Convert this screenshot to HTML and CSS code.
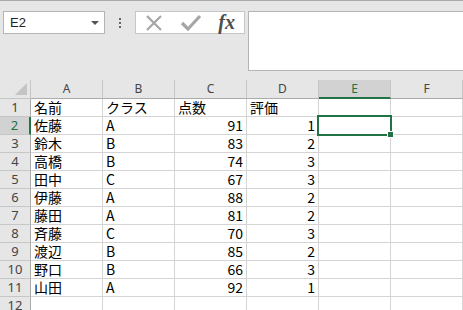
FILE: index.html
```html
<!DOCTYPE html>
<html>
<head>
    <meta charset="utf-8">
    <title>Excel</title>
    <link rel="stylesheet" href="styles.css">
</head>
<body>
    <div class="toolbar">
        <div class="namebox">
            <span>E2</span>
            <svg class="drop" width="8" height="4" viewBox="0 0 8 4"><path d="M0 0H8L4 4Z" fill="#555"/></svg>
        </div>
        <div class="dots"><i></i><i></i><i></i></div>
        <div class="fbuttons">
            <svg width="20" height="20" viewBox="0 0 20 20"><path d="M3 3L17 17M17 3L3 17" stroke="#a6a6a6" stroke-width="2.2" fill="none"/></svg>
            <svg width="22" height="20" viewBox="0 0 22 20"><path d="M2 10L8 16L20 3" stroke="#a6a6a6" stroke-width="3.2" fill="none"/></svg>
            <span class="fx">fx</span>
        </div>
        <div class="formula"></div>
    </div>

    <div class="sheet">
        <div class="corner"><svg width="12" height="12" viewBox="0 0 12 12"><path d="M12 0V12H0Z" fill="#c4c4c4"/></svg></div>
        <div class="colhead">A</div>
        <div class="colhead">B</div>
        <div class="colhead">C</div>
        <div class="colhead">D</div>
        <div class="colhead active">E</div>
        <div class="colhead">F</div>

        <div class="rowhead">1</div>
        <div class="cell">名前</div><div class="cell">クラス</div><div class="cell">点数</div><div class="cell">評価</div><div class="cell"></div><div class="cell"></div>

        <div class="rowhead active">2</div>
        <div class="cell">佐藤</div><div class="cell">A</div><div class="cell num">91</div><div class="cell num">1</div><div class="cell sel"><span class="selbox"></span></div><div class="cell"></div>

        <div class="rowhead">3</div>
        <div class="cell">鈴木</div><div class="cell">B</div><div class="cell num">83</div><div class="cell num">2</div><div class="cell"></div><div class="cell"></div>

        <div class="rowhead">4</div>
        <div class="cell">高橋</div><div class="cell">B</div><div class="cell num">74</div><div class="cell num">3</div><div class="cell"></div><div class="cell"></div>

        <div class="rowhead">5</div>
        <div class="cell">田中</div><div class="cell">C</div><div class="cell num">67</div><div class="cell num">3</div><div class="cell"></div><div class="cell"></div>

        <div class="rowhead">6</div>
        <div class="cell">伊藤</div><div class="cell">A</div><div class="cell num">88</div><div class="cell num">2</div><div class="cell"></div><div class="cell"></div>

        <div class="rowhead">7</div>
        <div class="cell">藤田</div><div class="cell">A</div><div class="cell num">81</div><div class="cell num">2</div><div class="cell"></div><div class="cell"></div>

        <div class="rowhead">8</div>
        <div class="cell">斉藤</div><div class="cell">C</div><div class="cell num">70</div><div class="cell num">3</div><div class="cell"></div><div class="cell"></div>

        <div class="rowhead">9</div>
        <div class="cell">渡辺</div><div class="cell">B</div><div class="cell num">85</div><div class="cell num">2</div><div class="cell"></div><div class="cell"></div>

        <div class="rowhead">10</div>
        <div class="cell">野口</div><div class="cell">B</div><div class="cell num">66</div><div class="cell num">3</div><div class="cell"></div><div class="cell"></div>

        <div class="rowhead">11</div>
        <div class="cell">山田</div><div class="cell">A</div><div class="cell num">92</div><div class="cell num">1</div><div class="cell"></div><div class="cell"></div>

        <div class="rowhead">12</div>
        <div class="cell"></div><div class="cell"></div><div class="cell"></div><div class="cell"></div><div class="cell"></div><div class="cell"></div>
    </div>
</body>
</html>
```

FILE: styles.css
```css
body {
    margin: 0;
    width: 463px;
    height: 310px;
    overflow: hidden;
    background-color: #fff;
    font-family: "Noto Sans CJK JP", sans-serif;
}
.toolbar {
    height: 80px;
    box-sizing: border-box;
    background-color: #e6e6e6;
    border-top: 1px solid #a9a9a9;
    display: flex;
    align-items: flex-start;
    padding-top: 10px;
    padding-left: 3px;
}
.namebox {
    width: 102px;
    height: 23px;
    box-sizing: border-box;
    background-color: #fff;
    border: 1px solid #b4b4b4;
    display: flex;
    align-items: center;
    justify-content: space-between;
    padding: 0 5px 0 6px;
    font-family: "Liberation Sans", sans-serif;
    font-size: 13px;
    color: #222;
}
.dots {
    width: 30px;
    height: 23px;
    display: flex;
    flex-direction: column;
    align-items: center;
    justify-content: center;
    gap: 2px;
}
.dots i {
    width: 2px;
    height: 2px;
    background-color: #666;
}
.fbuttons {
    width: 110px;
    height: 23px;
    box-sizing: border-box;
    background-color: #fff;
    border: 1px solid #c6c6c6;
    display: flex;
    align-items: center;
    justify-content: space-between;
    padding: 0 9px 0 8px;
}
.fx {
    font-family: "Liberation Serif", serif;
    font-style: italic;
    font-weight: bold;
    font-size: 20px;
    color: #4d4d4d;
    line-height: 1;
    margin-top: -2px;
}
.formula {
    flex: 1;
    height: 60px;
    box-sizing: border-box;
    margin-left: 3px;
    background-color: #fff;
    border: 1px solid #b4b4b4;
    border-right: none;
}
.sheet {
    display: grid;
    grid-template-columns: 31px repeat(6, 72px);
    grid-template-rows: 19px repeat(12, 18px);
}
.sheet > div {
    box-sizing: border-box;
}
.corner {
    background-color: #e6e6e6;
    border-right: 1px solid #c6c6c6;
    border-bottom: 1px solid #c6c6c6;
    display: flex;
    align-items: flex-end;
    justify-content: flex-end;
    padding: 0 3px 3px 0;
}
.colhead {
    background-color: #e6e6e6;
    border-right: 1px solid #c6c6c6;
    border-bottom: 1px solid #ababab;
    text-align: center;
    font-family: "Noto Sans", sans-serif;
    font-size: 12px;
    line-height: 18px;
    color: #444;
}
.colhead.active {
    background-color: #d2d2d2;
    color: #217346;
    border-bottom: 2px solid #217346;
}
.rowhead {
    background-color: #e6e6e6;
    border-right: 1px solid #ababab;
    border-bottom: 1px solid #c6c6c6;
    text-align: center;
    font-family: "Noto Sans", sans-serif;
    font-size: 13px;
    line-height: 17px;
    color: #444;
}
.rowhead.active {
    background-color: #d2d2d2;
    color: #217346;
    border-right: 2px solid #217346;
}
.cell {
    border-right: 1px solid #d4d4d4;
    border-bottom: 1px solid #d4d4d4;
    font-size: 14px;
    line-height: 16px;
    padding: 0 3px;
    color: #000;
    white-space: nowrap;
}
.cell.num {
    text-align: right;
}
.cell.sel {
    position: relative;
}
.selbox {
    position: absolute;
    left: -2px;
    top: -2px;
    right: -2px;
    bottom: -2px;
    border: 2px solid #217346;
}
.selbox::after {
    content: "";
    position: absolute;
    right: -4px;
    bottom: -4px;
    width: 5px;
    height: 5px;
    background-color: #217346;
    border: 1px solid #fff;
}
```
